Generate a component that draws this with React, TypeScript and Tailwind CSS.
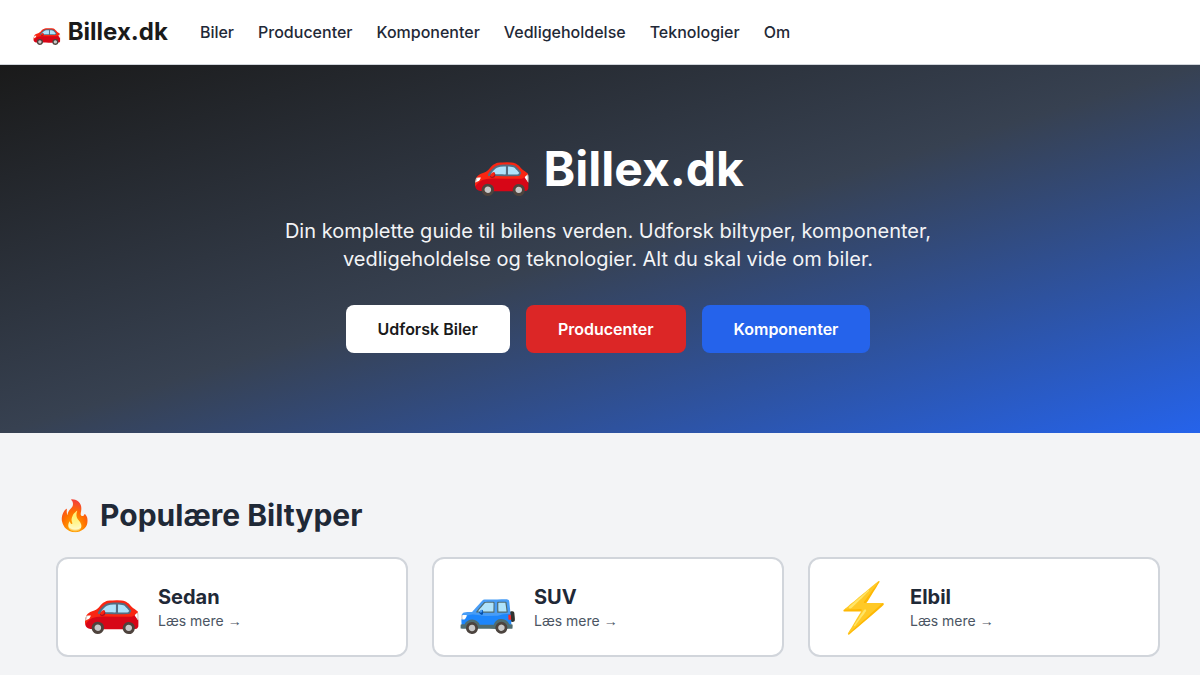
interface NavItem {
  label: string;
  href: string;
}

interface CarType {
  emoji: string;
  name: string;
  href: string;
}

const NAV_ITEMS: NavItem[] = [
  { label: "Biler", href: "#biler" },
  { label: "Producenter", href: "#producenter" },
  { label: "Komponenter", href: "#komponenter" },
  { label: "Vedligeholdelse", href: "#vedligeholdelse" },
  { label: "Teknologier", href: "#teknologier" },
  { label: "Om", href: "#om" },
];

const CAR_TYPES: CarType[] = [
  { emoji: "🚗", name: "Sedan", href: "#sedan" },
  { emoji: "🚙", name: "SUV", href: "#suv" },
  { emoji: "⚡", name: "Elbil", href: "#elbil" },
];

function Header() {
  return (
    <header className="bg-white border-b border-[#d1d5db]">
      <div className="flex items-center gap-8 h-16 px-8">
        <a href="#" className="text-2xl font-bold text-[#1a1a1a]">🚗 Billex.dk</a>
        <nav className="flex items-center gap-6">
          {NAV_ITEMS.map((item) => (
            <a key={item.href} href={item.href} className="font-medium text-[#1f2937] hover:text-[#2563eb] transition-colors">
              {item.label}
            </a>
          ))}
        </nav>
      </div>
    </header>
  );
}

function Hero() {
  const btn = "px-8 py-3 rounded-lg font-semibold transition-colors";
  return (
    <section className="bg-[linear-gradient(to_bottom_right,#1a1a1a,#374151,#2563eb)] text-white py-20 pl-4">
      <div className="max-w-3xl mx-auto text-center">
        <h1 className="text-5xl font-bold mb-6">🚗 Billex.dk</h1>
        <p className="text-xl max-w-2xl mx-auto mb-8 text-[#f3f4f6]">
          Din komplette guide til bilens verden. Udforsk biltyper, komponenter, vedligeholdelse og teknologier. Alt du skal vide om biler.
        </p>
        <div className="flex flex-wrap justify-center gap-4">
          <a href="#biler" className={`${btn} bg-white text-[#1a1a1a] hover:bg-gray-100`}>Udforsk Biler</a>
          <a href="#producenter" className={`${btn} bg-[#dc2626] hover:bg-[#b91c1c]`}>Producenter</a>
          <a href="#komponenter" className={`${btn} bg-[#2563eb] hover:bg-[#1d4ed8]`}>Komponenter</a>
        </div>
      </div>
    </section>
  );
}

function CarCard({ car }: { car: CarType }) {
  return (
    <a
      href={car.href}
      className="flex items-center gap-4 bg-white border-2 border-[#d1d5db] rounded-xl p-6 hover:border-[#2563eb] transition-colors"
    >
      <span className="text-5xl">{car.emoji}</span>
      <div>
        <h3 className="text-xl font-bold text-[#1f2937]">{car.name}</h3>
        <p className="text-sm text-[#4b5563]">
          Læs mere <span className="font-['Liberation_Sans',sans-serif]">→</span>
        </p>
      </div>
    </a>
  );
}

export default function App() {
  return (
    <div className="min-h-screen bg-[#f3f4f6] font-['Inter',sans-serif]">
      <Header />
      <main>
        <Hero />
        <section className="py-16 pl-14 pr-10">
          <h2 className="text-3xl font-bold text-[#1f2937] mb-6">🔥 Populære Biltyper</h2>
          <div className="grid grid-cols-3 gap-6">
            {CAR_TYPES.map((car) => (
              <CarCard key={car.href} car={car} />
            ))}
          </div>
        </section>
      </main>
    </div>
  );
}
